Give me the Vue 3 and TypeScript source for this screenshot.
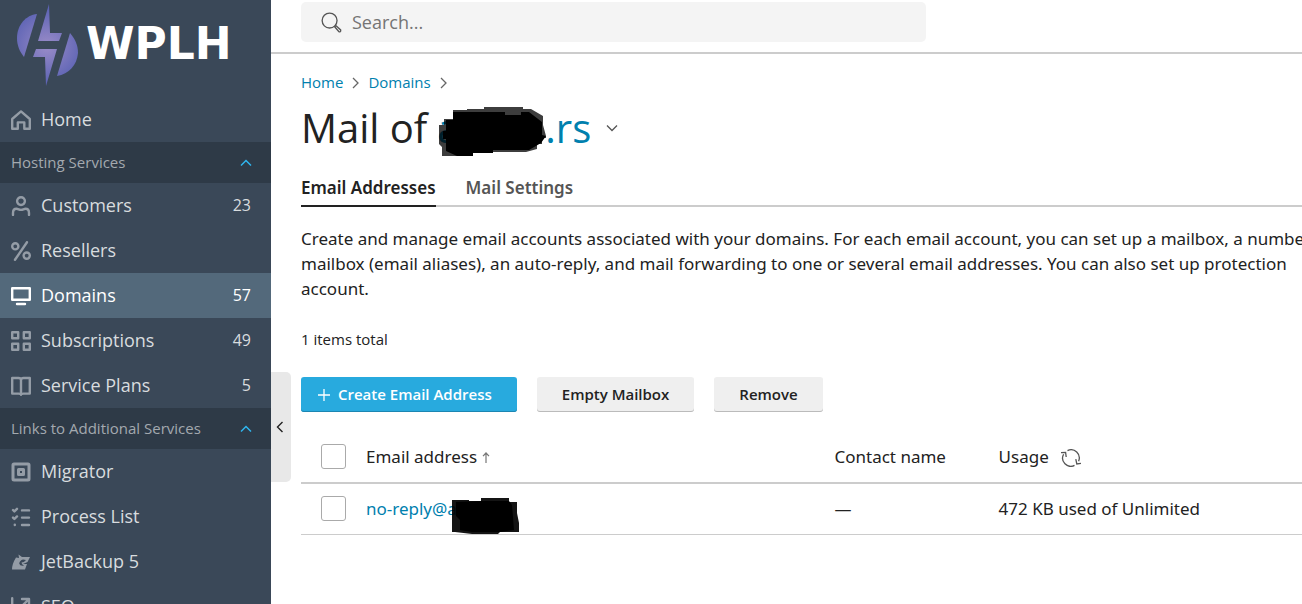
<script setup lang="ts">
import { ref } from 'vue'

interface NavItem {
  label: string
  icon: string
  count?: number
  active?: boolean
}

interface NavSection {
  title: string
  items: NavItem[]
}

const homeItem: NavItem = { label: 'Home', icon: 'home' }

const sections: NavSection[] = [
  {
    title: 'Hosting Services',
    items: [
      { label: 'Customers', icon: 'user', count: 23 },
      { label: 'Resellers', icon: 'percent' },
      { label: 'Domains', icon: 'monitor', count: 57, active: true },
      { label: 'Subscriptions', icon: 'grid', count: 49 },
      { label: 'Service Plans', icon: 'book', count: 5 },
    ],
  },
  {
    title: 'Links to Additional Services',
    items: [
      { label: 'Migrator', icon: 'migrator' },
      { label: 'Process List', icon: 'checklist' },
      { label: 'JetBackup 5', icon: 'jet' },
      { label: 'SEO', icon: 'seo' },
    ],
  },
]

/* Sidebar glyphs, each on a 20 by 20 grid */
const strokes: Record<string, string> = {
  home: 'M1.2 9 L10 1.4 L18.8 9 V18.8 H13.3 V12.4 H6.8 V18.8 H1.2 Z',
  user: 'M10 1.2 a3.9 3.9 0 1 1 0 7.8 a3.9 3.9 0 1 1 0 -7.8 Z M2 19 V17 C2 13.9 3.5 12.8 5.5 12.8 C7.2 12.8 8 13.9 10 13.9 C12 13.9 12.8 12.8 14.5 12.8 C16.5 12.8 18 13.9 18 17 V19',
  percent: 'M16 1.2 L4 18.8 M4.3 2.2 a3.1 3.1 0 1 1 0 6.2 a3.1 3.1 0 1 1 0 -6.2 Z M15.7 11.5 a3.1 3.1 0 1 1 0 6.2 a3.1 3.1 0 1 1 0 -6.2 Z',
  monitor: 'M1.2 2.2 H18.8 V13.8 H1.2 Z M6 18 H14',
  grid: 'M1.2 1.2 H7.2 V7.2 H1.2 Z M12.8 1.2 H18.8 V7.2 H12.8 Z M1.2 12.8 H7.2 V18.8 H1.2 Z M12.8 12.8 H18.8 V18.8 H12.8 Z',
  book: 'M1.2 2 H7.5 Q10 2 10 4 Q10 2 12.5 2 H18.8 V17.6 H12.5 Q10 17.6 10 18.8 Q10 17.6 7.5 17.6 H1.2 Z M10 4 V18.8',
  migrator: 'M3 2 H17 Q18 2 18 3 V17 Q18 18 17 18 H3 Q2 18 2 17 V3 Q2 2 3 2 Z M7.5 7.5 H12.5 V12.5 H7.5 Z',
  checklist: 'M2 3 L3.4 4.4 L6 1.8 M2 10.6 L3.4 12 L6 9.4 M3.8 17.6 V18 M11 3.4 H18 M11 10.6 H18 M11 18 H18',
  seo: 'M1.2 1.2 V19 M11 2 H18 V9 M18 2 L9 11',
}

const query = ref('')
const allSelected = ref(false)
const rowSelected = ref(false)
</script>

<template>
  <div class="layout">
    <aside class="sidebar">
      <a class="brand" href="#" aria-label="WPLH">
        <svg class="brand-mark" viewBox="0 0 62 84" aria-hidden="true">
          <defs>
            <radialGradient id="mark" cx="31" cy="42" r="38" gradientUnits="userSpaceOnUse">
              <stop offset="0" stop-color="#9a8cc8" />
              <stop offset="1" stop-color="#5c63b4" />
            </radialGradient>
          </defs>
          <g fill="url(#mark)">
            <path d="M21 10 C10 11 1 21 1 34 C1 42 4 48 8 53 Z" />
            <path d="M33 0 L34 29 H46 L43 37 H22 Z" />
            <path d="M20 45 H41 L30 82 L29 53 H17 Z" />
            <path d="M54 29 C59 35 62 41 62 49 C61 61 53 70 41 72 Z" />
          </g>
        </svg>
        <span class="brand-name">WPLH</span>
      </a>

      <nav>
        <a class="nav-item" href="#">
          <svg class="nav-icon" viewBox="0 0 20 20" aria-hidden="true"><path :d="strokes[homeItem.icon]" /></svg>
          <span class="nav-label">{{ homeItem.label }}</span>
        </a>
        <template v-for="section in sections" :key="section.title">
          <button class="section" type="button" aria-expanded="true">
            <span>{{ section.title }}</span>
            <svg class="chevron" viewBox="0 0 12 8" aria-hidden="true"><path d="M1 6.5 L6 1.5 L11 6.5" /></svg>
          </button>
          <a
            v-for="item in section.items"
            :key="item.label"
            class="nav-item"
            :class="{ active: item.active }"
            href="#"
          >
            <svg v-if="item.icon === 'jet'" class="nav-icon solid" viewBox="0 0 20 20" aria-hidden="true">
              <path fill-rule="evenodd" d="M5 5.5 L8 6 L7.5 2.5 L11 5 H19 L16.5 10 L12 12 H16 L14 17.5 H1 Q1 12 5 5.5 Z M12 7.6 Q8.8 8.4 8.2 11.5 Q9 14.5 13 13.6 Q10.5 12.8 10.5 10.6 Q13 10.5 15 8 Z" />
            </svg>
            <svg v-else class="nav-icon" viewBox="0 0 20 20" aria-hidden="true">
              <path :class="item.icon" :d="strokes[item.icon]" />
            </svg>
            <span class="nav-label">{{ item.label }}</span>
            <span v-if="item.count" class="nav-count">{{ item.count }}</span>
          </a>
        </template>
      </nav>
    </aside>

    <div class="page">
      <button class="collapse" type="button" aria-label="Collapse sidebar">
        <svg viewBox="0 0 8 12" aria-hidden="true"><path d="M6.5 1 L1.5 6 L6.5 11" /></svg>
      </button>

      <header class="topbar">
        <label class="search">
          <svg viewBox="0 0 22 22" aria-hidden="true">
            <circle cx="9" cy="9" r="7.8" />
            <path d="M14.3 15.5 L15.6 14.2 L20.6 18.8 Q21 20 20 20.7 Q19.2 21 18.6 20.4 Z" />
          </svg>
          <input v-model="query" type="search" placeholder="Search..." aria-label="Search" />
        </label>
      </header>

      <main class="content">
        <nav class="crumbs" aria-label="Breadcrumbs">
          <a href="#">Home</a>
          <svg viewBox="0 0 7 12" aria-hidden="true"><path d="M1 1 L6 6 L1 11" /></svg>
          <a href="#">Domains</a>
          <svg viewBox="0 0 7 12" aria-hidden="true"><path d="M1 1 L6 6 L1 11" /></svg>
        </nav>

        <div class="title">
          <h1>
            <span>Mail of</span>
            <a href="#"><span class="masked">a<svg class="title-mask" viewBox="0 0 108 50" aria-hidden="true">
              <path fill-opacity="0.76" d="M0 18 H5 V12 H14 V3 H28 V2 H45 V0 H84 V2 H92 L104 9 V18 L107 29 V31 H103 V37 H98 V42 L87 45 H54 L34 46 V49 H3 V40 L0 37 Z" />
              <path d="M7 13 H14 V5 H66 V8 H82 V5 H90 L103 15 V28 L107 29 L102 36 L90 43 H54 V46 H34 V49 H18 L7 44 V32 H4 V24 H7 Z" />
            </svg></span>.rs</a>
          </h1>
          <button class="title-menu" type="button" aria-label="Switch domain">
            <svg viewBox="0 0 12 8" aria-hidden="true"><path d="M1 1.5 L6 6.5 L11 1.5" /></svg>
          </button>
        </div>

        <div class="tabs" role="tablist">
          <button class="tab current" type="button" role="tab" aria-selected="true">Email Addresses</button>
          <button class="tab" type="button" role="tab" aria-selected="false">Mail Settings</button>
        </div>

        <p class="intro">
          Create and manage email accounts associated with your domains. For each email account, you can set up a mailbox, a number<br />
          mailbox (email aliases), an auto-reply, and mail forwarding to one or several email addresses. You can also set up protection<br />
          account.
        </p>

        <p class="total">1 items total</p>

        <div class="actions">
          <button class="btn primary" type="button">
            <svg viewBox="0 0 12 12" aria-hidden="true"><path d="M6 0 V12 M0 6 H12" /></svg>
            <span>Create Email Address</span>
          </button>
          <button class="btn" type="button">Empty Mailbox</button>
          <button class="btn" type="button">Remove</button>
        </div>

        <table>
          <colgroup>
            <col class="col-check" />
            <col class="col-email" />
            <col class="col-contact" />
            <col />
          </colgroup>
          <thead>
            <tr>
              <th scope="col" class="check"><input v-model="allSelected" type="checkbox" aria-label="Select all" /></th>
              <th scope="col">
                Email address
                <svg class="sort" viewBox="0 0 8 11" aria-hidden="true"><path d="M4 11 V1 M1 4.2 L4 1 L7 4.2" /></svg>
              </th>
              <th scope="col">Contact name</th>
              <th scope="col">
                Usage
                <button class="refresh" type="button" aria-label="Refresh usage">
                  <svg viewBox="0 0 20 18" aria-hidden="true">
                    <path d="M6.5 1.6 A8.2 8.2 0 0 1 17.6 12.2 M13.5 16.4 A8.2 8.2 0 0 1 2.6 5.2 M0 3.6 L4.6 3.4 L5.2 8 M20 14.4 L15.8 15 L14.8 10.2" />
                  </svg>
                </button>
              </th>
            </tr>
          </thead>
          <tbody>
            <tr>
              <td class="check"><input v-model="rowSelected" type="checkbox" aria-label="Select no-reply" /></td>
              <td>
                <a href="#">no-reply@<span class="masked">a<svg class="row-mask" viewBox="0 0 68 36" aria-hidden="true">
                  <path fill-opacity="0.92" d="M0 2 H17 V3 H29 V0 H57 V4 H65 V15 L67 25 V34 H48 L46 36 H20 L3 34 H0 Z" />
                  <path d="M4 4 L29 3 H57 L60 7 L62 32 L48 34 H20 L8 32 V22 L4 18 Z" />
                </svg></span></a>
              </td>
              <td>—</td>
              <td>472 KB used of Unlimited</td>
            </tr>
          </tbody>
        </table>
      </main>
    </div>
  </div>
</template>

<style>
body {
  margin: 0;
  background: #fff;
}
</style>

<style scoped>
.layout {
  display: flex;
  height: 100vh;
  overflow: hidden;
  font-family: "Open Sans", "Noto Sans", sans-serif;
  font-size: 18px;
  line-height: 25px;
  color: #222;
}

svg {
  display: block;
  fill: none;
  stroke: currentColor;
}

button {
  font: inherit;
  color: inherit;
  border: 0;
  background: none;
  padding: 0;
  cursor: pointer;
}

a {
  color: #0080ae;
  text-decoration: none;
}

.sidebar {
  flex: 0 0 271px;
  overflow: hidden;
  background: #3a4858;
  color: #d8dcdf;
}

.brand {
  display: flex;
  align-items: flex-start;
  gap: 8px;
  height: 93px;
  padding: 4px 16px 0;
  color: #fff;
}

.brand-mark {
  width: 62px;
  height: 84px;
  stroke: none;
}

.brand-name {
  font-family: "DejaVu Sans", sans-serif;
  font-size: 44px;
  font-weight: 700;
  line-height: 80px;
}

.nav-item {
  display: flex;
  align-items: center;
  gap: 10px;
  height: 45px;
  padding: 0 20px 0 11px;
  color: #d8dcdf;
}

.nav-item.active {
  background: #53697b;
  color: #fff;
}

.nav-icon {
  width: 20px;
  height: 20px;
  color: #949ca6;
  stroke-width: 2.4;
  stroke-linecap: round;
  stroke-linejoin: round;
}

.nav-icon.solid {
  fill: currentColor;
  stroke: none;
}

.nav-icon .migrator {
  stroke-width: 3;
}

.active .nav-icon {
  color: #fff;
}

.nav-count {
  margin-left: auto;
  font-size: 16px;
}

.section {
  display: flex;
  align-items: center;
  justify-content: space-between;
  width: 100%;
  height: 41px;
  padding: 0 19px 0 11px;
  background: #2e3a47;
  color: #a3a9af;
  font-size: 15px;
}

.chevron {
  width: 12px;
  height: 8px;
  color: #2fb5ee;
  stroke-width: 1.5;
}

.page {
  position: relative;
  flex: 1;
  min-width: 0;
  overflow: hidden;
}

.collapse {
  position: absolute;
  top: 372px;
  left: 0;
  display: flex;
  align-items: center;
  justify-content: center;
  box-sizing: border-box;
  width: 20px;
  height: 110px;
  padding-right: 2px;
  border-radius: 0 5px 5px 0;
  background: #e8e8e8;
}

.collapse svg {
  width: 8px;
  height: 12px;
  stroke-width: 1.4;
}

.topbar {
  padding: 2px 30px 10px;
  border-bottom: 2px solid #ccc;
}

.search {
  display: flex;
  align-items: center;
  gap: 10px;
  max-width: 585px;
  height: 40px;
  padding: 0 20px;
  border-radius: 5px;
  background: #f4f4f4;
}

.search svg {
  width: 21px;
  height: 21px;
  color: #555;
  stroke-width: 1.4;
}

.search input {
  flex: 1;
  min-width: 0;
  padding: 0;
  border: 0;
  outline: 0;
  background: none;
  font: inherit;
  color: inherit;
}

.search input::placeholder {
  color: #757575;
}

.content {
  padding: 16px 0 0 30px;
}

.crumbs {
  display: flex;
  align-items: center;
  gap: 9px;
  font-size: 15px;
}

.crumbs svg {
  width: 7px;
  height: 12px;
  color: #666;
  stroke-width: 1.3;
}

.title {
  display: flex;
  align-items: center;
  gap: 15px;
  margin-top: 8px;
}

h1 {
  display: flex;
  gap: 10px;
  margin: 0;
  font-size: 40px;
  font-weight: 400;
  line-height: 50px;
}

.masked {
  position: relative;
  display: inline-block;
}

h1 .masked {
  width: 108px;
}

.masked svg {
  position: absolute;
  stroke: none;
  fill: #000;
}

.title-mask {
  top: 4px;
  left: 2px;
  width: 108px;
  height: 50px;
}

.row-mask {
  top: 1px;
  left: 5px;
  width: 68px;
  height: 36px;
}

.title-menu svg {
  width: 12px;
  height: 8px;
  color: #555;
  stroke-width: 1.3;
}

.tabs {
  display: flex;
  gap: 30px;
  margin-top: 17px;
  box-shadow: inset 0 -2px #ccc;
}

.tabs,
.intro,
table {
  font-family: "Noto Sans", "Open Sans", sans-serif;
  font-size: 17px;
}

.tab {
  padding: 5px 0;
  border-bottom: 2px solid transparent;
  color: #555;
  font-weight: 600;
}

.tab.current {
  border-color: #222;
  color: #222;
}

.intro {
  margin: 19px 0 0;
  white-space: nowrap;
}

.total {
  margin: 26px 0 25px;
  font-size: 15px;
}

.actions {
  display: flex;
  gap: 20px;
}

.btn {
  display: flex;
  align-items: center;
  gap: 8px;
  height: 35px;
  padding: 0 25px;
  border-radius: 3px;
  background: #efefef;
  box-shadow: inset 0 -1px #bbb;
  font-size: 15px;
  font-weight: 600;
}

.btn.primary {
  padding: 0 25px 0 17px;
  background: #28aade;
  box-shadow: inset 0 -1px #1c86b2;
  color: #fff;
}

.btn svg {
  width: 12px;
  height: 12px;
  stroke-width: 1.3;
}

table {
  width: 100%;
  margin-top: 20px;
  border-collapse: separate;
  border-spacing: 0;
  table-layout: fixed;
}

.col-check {
  width: 65px;
}

.col-email {
  width: 46.8%;
}

.col-contact {
  width: 16.4%;
}

th,
td {
  height: 25px;
  padding: 12px 0 13px;
  font-weight: 400;
  line-height: 24px;
  text-align: left;
  white-space: nowrap;
}

th {
  border-bottom: 2px solid #ccc;
}

td {
  border-bottom: 1px solid #ccc;
}

.check {
  padding-left: 20px;
}

.check input {
  display: block;
  appearance: none;
  box-sizing: border-box;
  width: 25px;
  height: 25px;
  margin: 0;
  border: 1px solid #aaa;
  border-radius: 3px;
  background: #fff;
}

.check input:checked {
  background: #28aade;
}

.sort {
  display: inline-block;
  width: 8px;
  height: 11px;
  color: #777;
  stroke-width: 1.2;
}

.refresh {
  margin-left: 8px;
  vertical-align: middle;
}

.refresh svg {
  width: 20px;
  height: 18px;
  color: #555;
  stroke-width: 1.3;
}
</style>
